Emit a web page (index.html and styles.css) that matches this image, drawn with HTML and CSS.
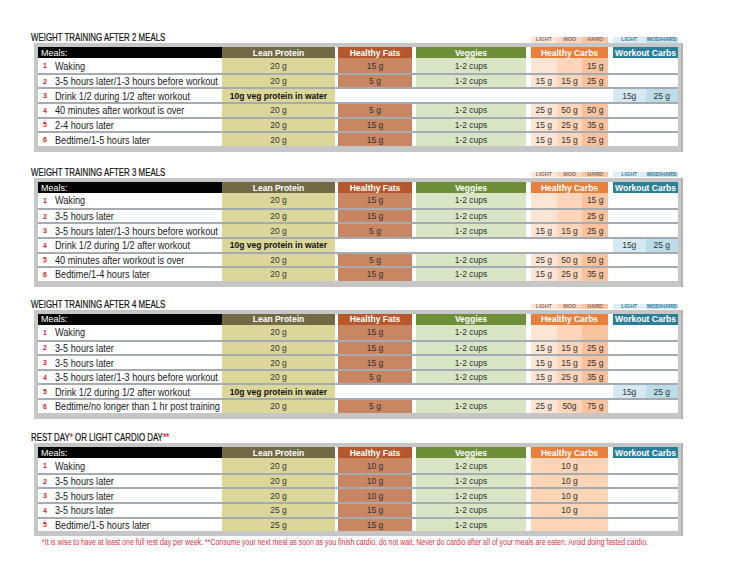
FILE: index.html
```html
<!DOCTYPE html>
<html>
<head>
<meta charset="utf-8">
<link rel="stylesheet" href="styles.css">
</head>
<body>

<section class="block b1">
  <div class="head">
    <h2 class="title"><span class="nt">WEIGHT TRAINING AFTER 2 MEALS</span></h2>
    <div class="labels"><span class="l1">LIGHT</span><span class="l2">MOD</span><span class="l3">HARD</span></div>
    <div class="wlabels"><span class="wl1">LIGHT</span><span class="wl2">MOD/HARD</span></div>
  </div>
  <div class="panel">
    <div class="hdr">
      <div class="hd h-meal">Meals:</div>
      <div class="hd h-pro">Lean Protein</div>
      <div class="hd h-fat">Healthy Fats</div>
      <div class="hd h-veg">Veggies</div>
      <div class="hd h-carb">Healthy Carbs</div>
      <div class="hd h-wk">Workout Carbs</div>
    </div>
    <div class="row">
      <div class="meal"><span class="num">1</span><span class="mt">Waking</span></div>
      <div class="cell pro">20 g</div><div class="cell fat">15 g</div><div class="cell veg">1-2 cups</div>
      <div class="carb"><span class="cell c1"></span><span class="cell c2"></span><span class="cell c3">15 g</span></div>
    </div>
    <div class="row">
      <div class="meal"><span class="num">2</span><span class="mt">3-5 hours later/1-3 hours before workout</span></div>
      <div class="cell pro">20 g</div><div class="cell fat">5 g</div><div class="cell veg">1-2 cups</div>
      <div class="carb"><span class="cell c1">15 g</span><span class="cell c2">15 g</span><span class="cell c3">25 g</span></div>
    </div>
    <div class="row">
      <div class="meal"><span class="num">3</span><span class="mt">Drink 1/2 during 1/2 after workout</span></div>
      <div class="cell pro strong">10g veg protein in water</div>
      <div class="wk"><span class="cell w1">15g</span><span class="cell w2">25 g</span></div>
    </div>
    <div class="row">
      <div class="meal"><span class="num">4</span><span class="mt">40 minutes after workout is over</span></div>
      <div class="cell pro">20 g</div><div class="cell fat">5 g</div><div class="cell veg">1-2 cups</div>
      <div class="carb"><span class="cell c1">25 g</span><span class="cell c2">50 g</span><span class="cell c3">50 g</span></div>
    </div>
    <div class="row">
      <div class="meal"><span class="num">5</span><span class="mt">2-4 hours later</span></div>
      <div class="cell pro">20 g</div><div class="cell fat">15 g</div><div class="cell veg">1-2 cups</div>
      <div class="carb"><span class="cell c1">15 g</span><span class="cell c2">25 g</span><span class="cell c3">35 g</span></div>
    </div>
    <div class="row">
      <div class="meal"><span class="num">6</span><span class="mt">Bedtime/1-5 hours later</span></div>
      <div class="cell pro">20 g</div><div class="cell fat">15 g</div><div class="cell veg">1-2 cups</div>
      <div class="carb"><span class="cell c1">15 g</span><span class="cell c2">15 g</span><span class="cell c3">25 g</span></div>
    </div>
  </div>
</section>

<section class="block b2">
  <div class="head">
    <h2 class="title"><span class="nt">WEIGHT TRAINING AFTER 3 MEALS</span></h2>
    <div class="labels"><span class="l1">LIGHT</span><span class="l2">MOD</span><span class="l3">HARD</span></div>
    <div class="wlabels"><span class="wl1">LIGHT</span><span class="wl2">MOD/HARD</span></div>
  </div>
  <div class="panel">
    <div class="hdr">
      <div class="hd h-meal">Meals:</div>
      <div class="hd h-pro">Lean Protein</div>
      <div class="hd h-fat">Healthy Fats</div>
      <div class="hd h-veg">Veggies</div>
      <div class="hd h-carb">Healthy Carbs</div>
      <div class="hd h-wk">Workout Carbs</div>
    </div>
    <div class="row">
      <div class="meal"><span class="num">1</span><span class="mt">Waking</span></div>
      <div class="cell pro">20 g</div><div class="cell fat">15 g</div><div class="cell veg">1-2 cups</div>
      <div class="carb"><span class="cell c1"></span><span class="cell c2"></span><span class="cell c3">15 g</span></div>
    </div>
    <div class="row">
      <div class="meal"><span class="num">2</span><span class="mt">3-5 hours later</span></div>
      <div class="cell pro">20 g</div><div class="cell fat">15 g</div><div class="cell veg">1-2 cups</div>
      <div class="carb"><span class="cell c1"></span><span class="cell c2"></span><span class="cell c3">25 g</span></div>
    </div>
    <div class="row">
      <div class="meal"><span class="num">3</span><span class="mt">3-5 hours later/1-3 hours before workout</span></div>
      <div class="cell pro">20 g</div><div class="cell fat">5 g</div><div class="cell veg">1-2 cups</div>
      <div class="carb"><span class="cell c1">15 g</span><span class="cell c2">15 g</span><span class="cell c3">25 g</span></div>
    </div>
    <div class="row">
      <div class="meal"><span class="num">4</span><span class="mt">Drink 1/2 during 1/2 after workout</span></div>
      <div class="cell pro strong">10g veg protein in water</div>
      <div class="wk"><span class="cell w1">15g</span><span class="cell w2">25 g</span></div>
    </div>
    <div class="row">
      <div class="meal"><span class="num">5</span><span class="mt">40 minutes after workout is over</span></div>
      <div class="cell pro">20 g</div><div class="cell fat">5 g</div><div class="cell veg">1-2 cups</div>
      <div class="carb"><span class="cell c1">25 g</span><span class="cell c2">50 g</span><span class="cell c3">50 g</span></div>
    </div>
    <div class="row">
      <div class="meal"><span class="num">6</span><span class="mt">Bedtime/1-4 hours later</span></div>
      <div class="cell pro">20 g</div><div class="cell fat">15 g</div><div class="cell veg">1-2 cups</div>
      <div class="carb"><span class="cell c1">15 g</span><span class="cell c2">25 g</span><span class="cell c3">35 g</span></div>
    </div>
  </div>
</section>

<section class="block b3">
  <div class="head">
    <h2 class="title"><span class="nt">WEIGHT TRAINING AFTER 4 MEALS</span></h2>
    <div class="labels"><span class="l1">LIGHT</span><span class="l2">MOD</span><span class="l3">HARD</span></div>
    <div class="wlabels"><span class="wl1">LIGHT</span><span class="wl2">MOD/HARD</span></div>
  </div>
  <div class="panel">
    <div class="hdr">
      <div class="hd h-meal">Meals:</div>
      <div class="hd h-pro">Lean Protein</div>
      <div class="hd h-fat">Healthy Fats</div>
      <div class="hd h-veg">Veggies</div>
      <div class="hd h-carb">Healthy Carbs</div>
      <div class="hd h-wk">Workout Carbs</div>
    </div>
    <div class="row">
      <div class="meal"><span class="num">1</span><span class="mt">Waking</span></div>
      <div class="cell pro">20 g</div><div class="cell fat">15 g</div><div class="cell veg">1-2 cups</div>
      <div class="carb"><span class="cell c1"></span><span class="cell c2"></span><span class="cell c3"></span></div>
    </div>
    <div class="row">
      <div class="meal"><span class="num">2</span><span class="mt">3-5 hours later</span></div>
      <div class="cell pro">20 g</div><div class="cell fat">15 g</div><div class="cell veg">1-2 cups</div>
      <div class="carb"><span class="cell c1">15 g</span><span class="cell c2">15 g</span><span class="cell c3">25 g</span></div>
    </div>
    <div class="row">
      <div class="meal"><span class="num">3</span><span class="mt">3-5 hours later</span></div>
      <div class="cell pro">20 g</div><div class="cell fat">15 g</div><div class="cell veg">1-2 cups</div>
      <div class="carb"><span class="cell c1">15 g</span><span class="cell c2">15 g</span><span class="cell c3">25 g</span></div>
    </div>
    <div class="row">
      <div class="meal"><span class="num">4</span><span class="mt">3-5 hours later/1-3 hours before workout</span></div>
      <div class="cell pro">20 g</div><div class="cell fat">5 g</div><div class="cell veg">1-2 cups</div>
      <div class="carb"><span class="cell c1">15 g</span><span class="cell c2">25 g</span><span class="cell c3">35 g</span></div>
    </div>
    <div class="row">
      <div class="meal"><span class="num">5</span><span class="mt">Drink 1/2 during 1/2 after workout</span></div>
      <div class="cell pro strong">10g veg protein in water</div>
      <div class="wk"><span class="cell w1">15g</span><span class="cell w2">25 g</span></div>
    </div>
    <div class="row">
      <div class="meal"><span class="num">6</span><span class="mt">Bedtime/no longer than 1 hr post training</span></div>
      <div class="cell pro">20 g</div><div class="cell fat">5 g</div><div class="cell veg">1-2 cups</div>
      <div class="carb"><span class="cell c1">25 g</span><span class="cell c2">50g</span><span class="cell c3">75 g</span></div>
    </div>
  </div>
</section>

<section class="block b4">
  <div class="head">
    <h2 class="title"><span class="nt">REST DAY<span class="ast">*</span> OR LIGHT CARDIO DAY<span class="ast">**</span></span></h2>
  </div>
  <div class="panel rest">
    <div class="hdr">
      <div class="hd h-meal">Meals:</div>
      <div class="hd h-pro">Lean Protein</div>
      <div class="hd h-fat">Healthy Fats</div>
      <div class="hd h-veg">Veggies</div>
      <div class="hd h-carb">Healthy Carbs</div>
      <div class="hd h-wk">Workout Carbs</div>
    </div>
    <div class="row">
      <div class="meal"><span class="num">1</span><span class="mt">Waking</span></div>
      <div class="cell pro">20 g</div><div class="cell fat">10 g</div><div class="cell veg">1-2 cups</div>
      <div class="cell carb-one">10 g</div>
    </div>
    <div class="row">
      <div class="meal"><span class="num">2</span><span class="mt">3-5 hours later</span></div>
      <div class="cell pro">20 g</div><div class="cell fat">10 g</div><div class="cell veg">1-2 cups</div>
      <div class="cell carb-one">10 g</div>
    </div>
    <div class="row">
      <div class="meal"><span class="num">3</span><span class="mt">3-5 hours later</span></div>
      <div class="cell pro">20 g</div><div class="cell fat">10 g</div><div class="cell veg">1-2 cups</div>
      <div class="cell carb-one">10 g</div>
    </div>
    <div class="row">
      <div class="meal"><span class="num">4</span><span class="mt">3-5 hours later</span></div>
      <div class="cell pro">25 g</div><div class="cell fat">15 g</div><div class="cell veg">1-2 cups</div>
      <div class="cell carb-one">10 g</div>
    </div>
    <div class="row">
      <div class="meal"><span class="num">5</span><span class="mt">Bedtime/1-5 hours later</span></div>
      <div class="cell pro">25 g</div><div class="cell fat">15 g</div><div class="cell veg">1-2 cups</div>
      <div class="cell carb-one"></div>
    </div>
  </div>
  <p class="note"><span class="nn">*It is wise to have at least one full rest day per week. **Consume your next meal as soon as you finish cardio, do not wait. Never do cardio after all of your meals are eaten. Avoid doing fasted cardio.</span></p>
</section>

</body>
</html>
```

FILE: styles.css
```css
* { box-sizing: border-box; }

html, body { overflow-x: hidden; }

body {
  margin: 0;
  background: #ffffff;
  font-family: "Liberation Sans", Arial, sans-serif;
  color: #222;
}

.block {
  margin-left: 34px;
  width: 649px;
}
.b1 { padding-top: 31px; }
.b2 { margin-top: 14px; }
.b3 { margin-top: 11px; }
.b4 { margin-top: 12.4px; }

.head,
.hdr,
.row {
  display: grid;
  grid-template-columns: 184px 113px 3px 74px 4px 110px 5px 77px 5px 65px;
}

.head {
  height: 12px;
  margin-left: 4px;
  align-items: end;
}

.title {
  grid-column: 1 / 8;
  grid-row: 1;
  margin: 0 0 0 -7px;
  font-family: "Liberation Sans", Arial, sans-serif;
  font-weight: normal;
  font-size: 10.6px;
  line-height: 12px;
  color: #111;
  white-space: nowrap;
}
.nt {
  display: inline-block;
  transform: scaleX(0.745);
  transform-origin: 0 50%;
  -webkit-text-stroke: 0.2px #111;
}
.ast { color: #e0202c; -webkit-text-stroke: 0.2px #e0202c; }

.labels,
.wlabels {
  grid-row: 1;
  display: grid;
  height: 5.5px;
  margin-bottom: 0.5px;
  font-size: 5.4px;
  line-height: 5.6px;
  font-weight: bold;
  text-align: center;
  white-space: nowrap;
}
.labels { grid-column: 8; grid-template-columns: repeat(3, 1fr); color: #8c7266; }
.wlabels { grid-column: 10; grid-template-columns: 1fr 1fr; color: #3f7f9e; }
.l1 { background: #fde6d8; }
.l2 { background: #fcd6bd; }
.l3 { background: #f9c4a2; }
.wl1 { background: #dcedf5; }
.wl2 { background: #c4e0eb; }

.panel {
  background: #c6c6c6;
  padding: 4px 3px 6px 4px;
  border-right: 2px solid #b2b2b2;
}
.panel.rest { padding-bottom: 5px; }

.hdr {
  height: 11.3px;
  background: #ffffff;
}

.row {
  height: 14.6px;
  background: #ffffff;
  border-top: 2px solid #a6abb1;
}
.hdr + .row { border-top: 0; }

.hd {
  display: flex;
  align-items: center;
  justify-content: center;
  color: #ffffff;
  font-weight: bold;
  font-size: 8.5px;
  white-space: nowrap;
}
.h-meal { grid-column: 1; background: #030303; justify-content: flex-start; padding-left: 3px; font-weight: normal; font-size: 9px; }
.h-pro { grid-column: 2; background: #716a44; }
.h-fat { grid-column: 4; background: #b6582b; }
.h-veg { grid-column: 6; background: #6f8e3a; }
.h-carb { grid-column: 8; background: #e8803b; }
.h-wk { grid-column: 10; background: #2c7f98; }

.meal {
  grid-column: 1;
  display: flex;
  align-items: center;
  font-size: 11px;
  color: #1b1b1b;
  white-space: nowrap;
}
.mt {
  display: inline-block;
  transform: scaleX(0.83);
  transform-origin: 0 50%;
}
.num {
  flex: none;
  width: 17px;
  padding-left: 5px;
  font-weight: bold;
  font-size: 7px;
  color: #d42632;
}

.cell {
  display: flex;
  align-items: center;
  justify-content: center;
  font-size: 8.5px;
  color: #333;
  white-space: nowrap;
}
.pro { grid-column: 2; background: #dbd79b; }
.strong { font-weight: bold; color: #111; }
.fat { grid-column: 4; background: #c98663; }
.veg { grid-column: 6; background: #dae5c6; }

.carb {
  grid-column: 8;
  display: grid;
  grid-template-columns: repeat(3, 1fr);
}
.c1 { background: #fde5d6; }
.c2 { background: #fcd5ba; }
.c3 { background: #f9c29e; }
.carb-one { grid-column: 8; background: #fcd4b6; }

.wk {
  grid-column: 10;
  display: grid;
  grid-template-columns: 1fr 1fr;
}
.w1 { background: #d6e9f2; }
.w2 { background: #bcdce8; }

.note {
  margin: 1px 0 0;
  padding: 0 0 0 7.7px;
  font-size: 8.5px;
  line-height: 10px;
  color: #d8343f;
  white-space: nowrap;
  overflow: hidden;
}
.nn {
  display: inline-block;
  margin-right: -140px;
  transform: scaleX(0.816);
  transform-origin: 0 50%;
}
```
